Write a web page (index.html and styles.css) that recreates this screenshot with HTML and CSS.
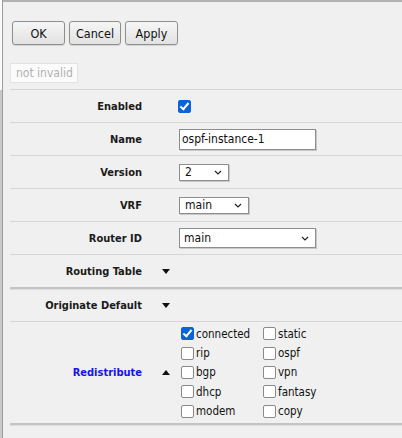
FILE: index.html
```html
<!DOCTYPE html>
<html>
<head>
<meta charset="utf-8">
<link rel="stylesheet" href="styles.css">
</head>
<body>
<div class="page">
  <div class="gutter"></div>
  <div class="panel">
    <div class="toolbar">
      <button class="btn btn-ok">OK</button>
      <button class="btn btn-cancel">Cancel</button>
      <button class="btn btn-apply">Apply</button>
    </div>
    <div class="status">not invalid</div>
    <div class="form">
      <div class="row">
        <div class="label">Enabled</div>
        <div class="mid"></div>
        <div class="value"><span class="cb checked"></span></div>
      </div>
      <div class="row">
        <div class="label">Name</div>
        <div class="mid"></div>
        <div class="value"><div class="text-input">ospf-instance-1</div></div>
      </div>
      <div class="row">
        <div class="label">Version</div>
        <div class="mid"></div>
        <div class="value"><div class="select sel-version"><span>2</span><svg class="chev" viewBox="0 0 8 5" width="8" height="5"><path d="M1 1 L4 4 L7 1" fill="none" stroke="#222" stroke-width="1.2"/></svg></div></div>
      </div>
      <div class="row">
        <div class="label">VRF</div>
        <div class="mid"></div>
        <div class="value"><div class="select sel-vrf"><span>main</span><svg class="chev" viewBox="0 0 8 5" width="8" height="5"><path d="M1 1 L4 4 L7 1" fill="none" stroke="#222" stroke-width="1.2"/></svg></div></div>
      </div>
      <div class="row">
        <div class="label">Router ID</div>
        <div class="mid"></div>
        <div class="value"><div class="select sel-router"><span>main</span><svg class="chev" viewBox="0 0 8 5" width="8" height="5"><path d="M1 1 L4 4 L7 1" fill="none" stroke="#222" stroke-width="1.2"/></svg></div></div>
      </div>
      <div class="row section-end">
        <div class="label">Routing Table</div>
        <div class="mid"><span class="arrow-down"></span></div>
        <div class="value"></div>
      </div>
      <div class="row">
        <div class="label">Originate Default</div>
        <div class="mid"><span class="arrow-down"></span></div>
        <div class="value"></div>
      </div>
      <div class="row row-tall section-end">
        <div class="label label-link">Redistribute</div>
        <div class="mid"><span class="arrow-up"></span></div>
        <div class="value">
          <div class="options">
            <label class="opt"><span class="cb checked"></span>connected</label>
            <label class="opt"><span class="cb"></span>static</label>
            <label class="opt"><span class="cb"></span>rip</label>
            <label class="opt"><span class="cb"></span>ospf</label>
            <label class="opt"><span class="cb"></span>bgp</label>
            <label class="opt"><span class="cb"></span>vpn</label>
            <label class="opt"><span class="cb"></span>dhcp</label>
            <label class="opt"><span class="cb"></span>fantasy</label>
            <label class="opt"><span class="cb"></span>modem</label>
            <label class="opt"><span class="cb"></span>copy</label>
          </div>
        </div>
      </div>
    </div>
  </div>
</div>
</body>
</html>
```
FILE: styles.css
```css
html, body {
  margin: 0;
  padding: 0;
  height: 100%;
  background: #f0f0f0;
}
body {
  font-family: "DejaVu Sans Condensed", "DejaVu Sans", sans-serif;
  font-stretch: condensed;
  font-size: 11px;
  color: #111;
  overflow: hidden;
}
.page {
  display: flex;
  min-height: 438px;
}
.gutter {
  width: 2px;
  flex: none;
  border-right: 1px solid #9c9c9c;
  background:
    linear-gradient(#fbfbfb 0 90px, #c9c9c9 90px 100%);
}
.panel {
  flex: 1;
  border-top: 2px solid #b2b2b2;
  background: #f0f0f0;
}
.toolbar {
  display: flex;
  gap: 4px;
  padding: 19px 0 0 9px;
}
.btn {
  height: 24px;
  padding: 0;
  font: inherit;
  font-size: 12.5px;
  color: #111;
  border: 1px solid #8e8e8e;
  border-radius: 3px;
  background: linear-gradient(#f6f6f6, #e2e2e2);
  box-shadow: 0 1px 1px rgba(0,0,0,0.12);
}
.btn-ok { width: 53px; }
.btn-cancel { width: 52px; }
.btn-apply { width: 53px; }
.status {
  margin: 18px 0 0 7px;
  width: 61px;
  height: 18px;
  line-height: 18px;
  padding: 0 0 0 5px;
  background: #fbfbfb;
  border: 1px solid #e3e3e3;
  color: #b0b0b0;
  font-size: 12px;
}
.form {
  margin: 6px 0 0 7px;
  border-top: 1px solid #d6d6d6;
}
.row {
  display: grid;
  grid-template-columns: 132px 36px 1fr;
  align-items: center;
  height: 32px;
  border-bottom: 1px solid #d6d6d6;
}
.row.section-end {
  border-bottom: 2px solid #c4c4c4;
  box-shadow: 0 1px 0 #dcdcdc;
}
.row-tall {
  height: 101px;
}
.label {
  text-align: right;
  font-weight: bold;
  font-size: 11px;
  color: #1a1a1a;
}
.label-link {
  color: #1414f0;
}
.mid {
  display: flex;
  align-items: center;
  padding-left: 20px;
}
.arrow-down {
  width: 0;
  height: 0;
  border-left: 4px solid transparent;
  border-right: 4px solid transparent;
  border-top: 5px solid #111;
}
.arrow-up {
  width: 0;
  height: 0;
  border-left: 4px solid transparent;
  border-right: 4px solid transparent;
  border-bottom: 5px solid #111;
}
.value {
  display: flex;
  align-items: center;
}
.cb {
  display: inline-block;
  box-sizing: border-box;
  width: 13px;
  height: 13px;
  border: 1.5px solid #8a8a8a;
  border-radius: 2px;
  background: #fff;
  flex: none;
  position: relative;
}
.cb.checked {
  background: #0b63dc;
  border-color: #0b63dc;
}
.cb.checked::after {
  content: "";
  position: absolute;
  left: 3px;
  top: 0px;
  width: 3px;
  height: 7px;
  border: solid #fff;
  border-width: 0 2px 2px 0;
  transform: rotate(40deg);
}
.text-input {
  box-sizing: border-box;
  width: 137px;
  height: 21px;
  line-height: 19px;
  margin-left: 1px;
  padding-left: 2px;
  background: #fff;
  border: 1px solid #8e8e8e;
  box-shadow: 1px 1px 0 #c8c8c8;
  font-size: 12px;
}
.select {
  box-sizing: border-box;
  display: flex;
  align-items: center;
  justify-content: space-between;
  margin-left: 1px;
  padding: 0 6px 0 5px;
  background: #fff;
  border: 1px solid #8e8e8e;
  box-shadow: 1px 1px 0 #c8c8c8;
  font-size: 12px;
}
.sel-version { width: 50px; height: 17px; }
.sel-vrf { width: 70px; height: 17px; }
.sel-router { width: 137px; height: 20px; padding-left: 4px; }
.chev { display: block; }
.options {
  display: grid;
  grid-template-columns: 82px 82px;
  grid-auto-rows: 19.4px;
  padding-left: 3px;
}
.opt {
  display: flex;
  align-items: center;
  gap: 2px;
  font-size: 11.5px;
  color: #111;
}
```
